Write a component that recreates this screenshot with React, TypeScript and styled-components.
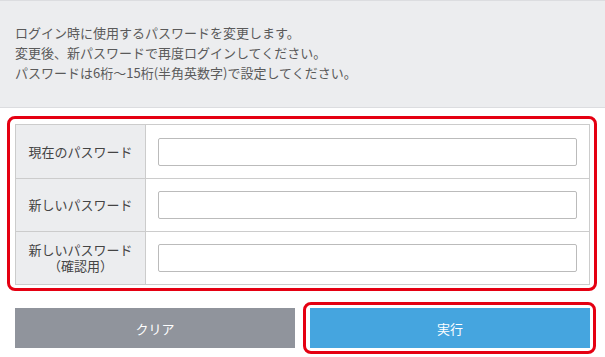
import React from "react";
import styled, { createGlobalStyle } from "styled-components";

const Global = createGlobalStyle`
  html, body { margin: 0; padding: 0; background: #fff; }
  body { font-family: "Noto Sans CJK JP", "Noto Sans", sans-serif; }
  * { box-sizing: border-box; }
`;

const Page = styled.div`
  width: 605px;
  padding-bottom: 7px;
`;

const Intro = styled.div`
  background: #ecedef;
  border-top: 1px solid #dcdde0;
  border-bottom: 1px solid #dcdde0;
  padding: 22px 15px 24px;
  font-size: 13px;
  line-height: 20px;
  color: #5a5a5a;
`;

const Highlight = styled.div`
  margin: 8px 8px 0 7px;
  width: 590px;
  border: 3px solid #e50012;
  border-radius: 8px;
  padding: 5px 4px 3px 5px;
`;

const Form = styled.div`
  border: 1px solid #cccccc;
  display: flex;
  flex-direction: column;
`;

const Row = styled.div`
  display: flex;
  height: 53px;
  & + & {
    border-top: 1px solid #cccccc;
  }
`;

const Label = styled.div`
  width: 130px;
  flex: none;
  background: #ecedef;
  border-right: 1px solid #cccccc;
  display: flex;
  flex-direction: column;
  align-items: center;
  justify-content: center;
  text-align: center;
  font-size: 13px;
  line-height: 19px;
  color: #444;
`;

const LabelLine = styled.span`
  display: block;
  height: 16px;
  line-height: 16px;
`;

const Field = styled.div`
  flex: 1;
  display: flex;
  align-items: center;
  padding: 0 12px;
`;

const Input = styled.input`
  width: 100%;
  height: 28px;
  border: 1px solid #bbbbbb;
  border-radius: 2px;
  background: #fff;
  padding: 0 8px;
  font-size: 13px;
  font-family: inherit;
  outline: none;
`;

const Actions = styled.div`
  display: flex;
  gap: 15px;
  padding: 0 15px;
  margin-top: 17px;
`;

const Button = styled.button<{ $tone: "gray" | "blue"; $focused?: boolean }>`
  position: relative;
  flex: 1;
  height: 40px;
  border: none;
  border-radius: 0;
  background: ${(p) => (p.$tone === "gray" ? "#90949c" : "#45a5df")};
  color: #fff;
  font-family: inherit;
  font-size: 13px;
  cursor: pointer;
  ${(p) =>
    p.$focused
      ? `
    &::after {
      content: "";
      position: absolute;
      top: -6px;
      left: -7px;
      right: -6px;
      bottom: -6px;
      border: 3px solid #e50012;
      border-radius: 8px;
      pointer-events: none;
    }
  `
      : ""}
`;

const fields = [
  { label: ["現在のパスワード"] },
  { label: ["新しいパスワード"] },
  { label: ["新しいパスワード", "（確認用）"] },
];

export default function App() {
  return (
    <Page>
      <Global />
      <Intro>
        ログイン時に使用するパスワードを変更します。
        <br />
        変更後、新パスワードで再度ログインしてください。
        <br />
        パスワードは6桁～15桁(半角英数字)で設定してください。
      </Intro>
      <Highlight>
        <Form>
          {fields.map((f, i) => (
            <Row key={i}>
              <Label>
                {f.label.map((l, j) => (
                  <LabelLine key={j}>{l}</LabelLine>
                ))}
              </Label>
              <Field>
                <Input type="password" />
              </Field>
            </Row>
          ))}
        </Form>
      </Highlight>
      <Actions>
        <Button $tone="gray">クリア</Button>
        <Button $tone="blue" $focused>
          実行
        </Button>
      </Actions>
    </Page>
  );
}
